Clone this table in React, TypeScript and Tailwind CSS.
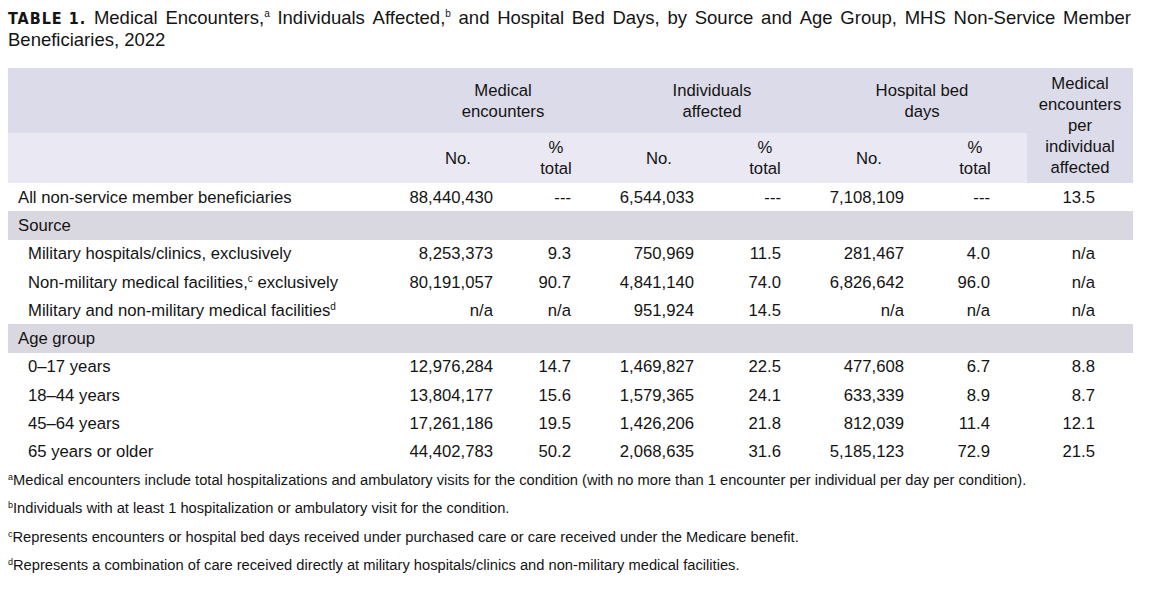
import React from "react";

type Row =
  | { kind: "section"; label: string }
  | { kind: "data"; label: React.ReactNode; indent: boolean; v: string[] };

const Sup = ({ c }: { c: string }) => <sup className="text-[10px] relative -top-[6px]">{c}</sup>;

const rows: Row[] = [
  { kind: "data", label: "All non-service member beneficiaries", indent: false, v: ["88,440,430", "---", "6,544,033", "---", "7,108,109", "---", "13.5"] },
  { kind: "section", label: "Source" },
  { kind: "data", label: "Military hospitals/clinics, exclusively", indent: true, v: ["8,253,373", "9.3", "750,969", "11.5", "281,467", "4.0", "n/a"] },
  {
    kind: "data",
    label: (
      <>
        Non-military medical facilities,<Sup c="c" />
        {" exclusively"}
      </>
    ),
    indent: true,
    v: ["80,191,057", "90.7", "4,841,140", "74.0", "6,826,642", "96.0", "n/a"],
  },
  {
    kind: "data",
    label: (
      <>
        Military and non-military medical facilities<Sup c="d" />
      </>
    ),
    indent: true,
    v: ["n/a", "n/a", "951,924", "14.5", "n/a", "n/a", "n/a"],
  },
  { kind: "section", label: "Age group" },
  { kind: "data", label: "0–17 years", indent: true, v: ["12,976,284", "14.7", "1,469,827", "22.5", "477,608", "6.7", "8.8"] },
  { kind: "data", label: "18–44 years", indent: true, v: ["13,804,177", "15.6", "1,579,365", "24.1", "633,339", "8.9", "8.7"] },
  { kind: "data", label: "45–64 years", indent: true, v: ["17,261,186", "19.5", "1,426,206", "21.8", "812,039", "11.4", "12.1"] },
  { kind: "data", label: "65 years or older", indent: true, v: ["44,402,783", "50.2", "2,068,635", "31.6", "5,185,123", "72.9", "21.5"] },
];

const valPad = ["pr-[7px]", "pr-[41px]", "pr-[12px]", "pr-[43px]", "pr-[10px]", "pr-[37px]", "pr-[38px]"];

const footnotes: [string, string][] = [
  ["a", "Medical encounters include total hospitalizations and ambulatory visits for the condition (with no more than 1 encounter per individual per day per condition)."],
  ["b", "Individuals with at least 1 hospitalization or ambulatory visit for the condition."],
  ["c", "Represents encounters or hospital bed days received under purchased care or care received under the Medicare benefit."],
  ["d", "Represents a combination of care received directly at military hospitals/clinics and non-military medical facilities."],
];

const titleWords = ["and", "Hospital", "Bed", "Days,", "by", "Source", "and", "Age", "Group,", "MHS", "Non-Service", "Member"];

export default function App() {
  return (
    <div
      className="w-[1150px] h-[589px] bg-white text-[#141414] overflow-hidden"
      style={{ fontFamily: '"Liberation Sans", Arial, sans-serif' }}
    >
      <div className="pl-[8px] pt-[7px] w-[1131px] text-[18.5px] leading-[22px]">
        <div className="whitespace-nowrap flex justify-between items-baseline h-[22px]">
          <span
            className="font-bold tracking-[1px] text-[16px]"
            style={{ fontFamily: '"DejaVu Sans Condensed", "Liberation Sans Narrow", "Liberation Sans", sans-serif', fontStretch: "condensed" }}
          >
            TABLE 1.
          </span>
          <span>Medical</span>
          <span>
            Encounters,<sup className="text-[10px] relative -top-[7px]">a</sup>
          </span>
          <span>Individuals</span>
          <span>
            Affected,<sup className="text-[10px] relative -top-[7px]">b</sup>
          </span>
          {titleWords.map((w, i) => (
            <span key={i}>{w}</span>
          ))}
        </div>
        <div className="h-[22px]">Beneficiaries, 2022</div>
      </div>

      <div className="ml-[8px] mt-[17px] w-[1125px] grid grid-cols-[408px_84px_112px_94px_118px_90px_113px_106px] text-[16.7px] leading-[21px]">
        {/* header row 1 */}
        <div className="bg-[#dcdbe9] h-[65px]" />
        <div className="col-span-2 bg-[#dcdbe9] h-[65px] flex items-center justify-center text-center pr-[22px]">
          Medical
          <br />
          encounters
        </div>
        <div className="col-span-2 bg-[#dcdbe9] h-[65px] flex items-center justify-center text-center pr-[12px]">
          Individuals
          <br />
          affected
        </div>
        <div className="col-span-2 bg-[#dcdbe9] h-[65px] flex items-center justify-center text-center pr-[7px]">
          Hospital bed
          <br />
          days
        </div>
        <div className="row-span-2 bg-[#dcdbe9] flex items-center justify-center text-center">
          Medical
          <br />
          encounters
          <br />
          per
          <br />
          individual
          <br />
          affected
        </div>
        {/* header row 2 */}
        <div className="bg-[#e9e8f3] h-[50px]" />
        <div className="bg-[#e9e8f3] h-[50px] flex items-center justify-center">No.</div>
        <div className="bg-[#e9e8f3] h-[50px] flex items-center justify-center text-center">
          %
          <br />
          total
        </div>
        <div className="bg-[#e9e8f3] h-[50px] flex items-center justify-center">No.</div>
        <div className="bg-[#e9e8f3] h-[50px] flex items-center justify-center text-center">
          %
          <br />
          total
        </div>
        <div className="bg-[#e9e8f3] h-[50px] flex items-center justify-center">No.</div>
        <div className="bg-[#e9e8f3] h-[50px] flex items-center justify-center text-center pl-[9px]">
          %
          <br />
          total
        </div>

        {rows.map((r, i) =>
          r.kind === "section" ? (
            <div key={i} className="col-span-8 bg-[#d9d7df] h-[28.3px] flex items-center pl-[10px]">
              {r.label}
            </div>
          ) : (
            <React.Fragment key={i}>
              <div className={`h-[28.3px] flex items-center whitespace-pre ${r.indent ? "pl-[20px]" : "pl-[10px]"}`}>
                <span>{r.label}</span>
              </div>
              {r.v.map((val, j) => (
                <div key={j} className={`h-[28.3px] flex items-center justify-end ${valPad[j]}`}>
                  {val}
                </div>
              ))}
            </React.Fragment>
          )
        )}
      </div>

      <div className="ml-[8px] text-[14.7px]">
        {footnotes.map(([l, t]) => (
          <div key={l} className="h-[28.3px] flex items-center whitespace-nowrap">
            <span>
              <sup className="text-[9px] relative -top-[5px]">{l}</sup>
              {t}
            </span>
          </div>
        ))}
      </div>
    </div>
  );
}
